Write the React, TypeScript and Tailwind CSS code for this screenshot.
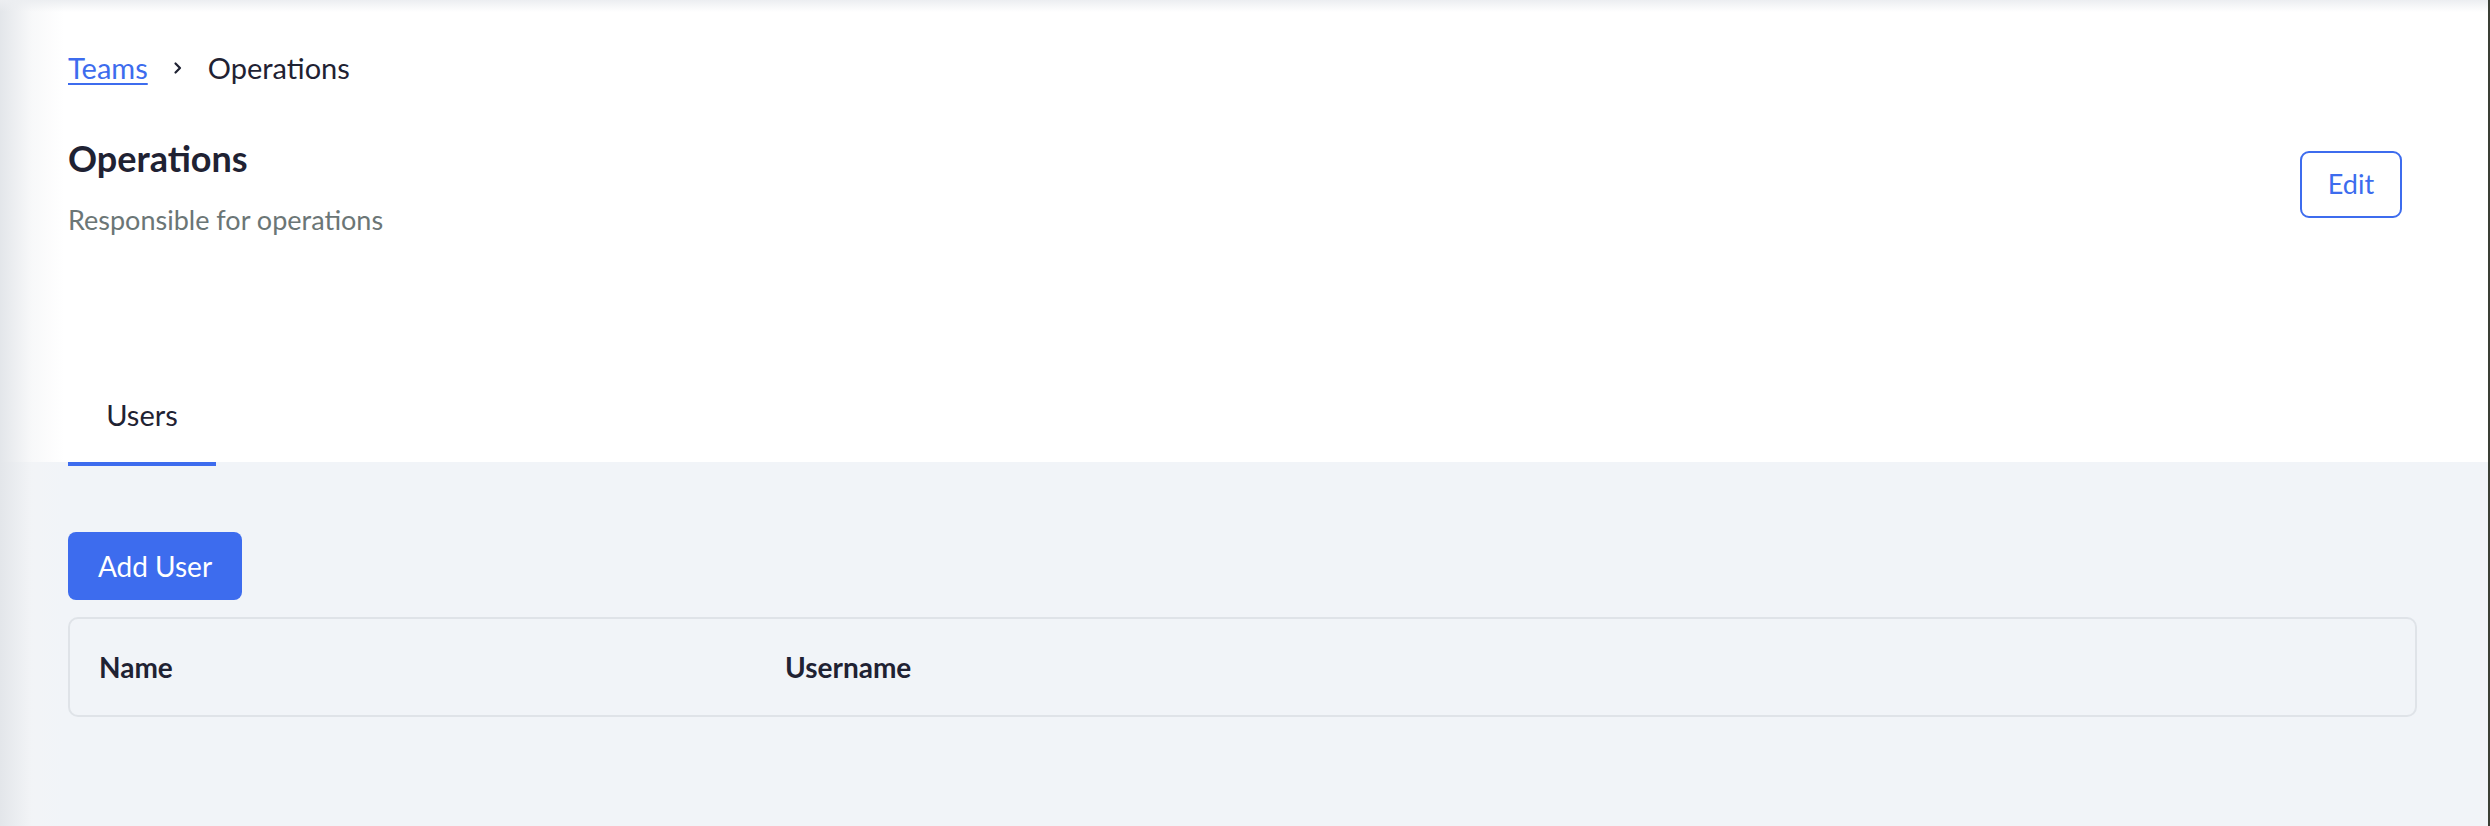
import React from "react";

function Chevron() {
  return (
    <svg width="12" height="14" viewBox="0 0 12 14" fill="none" className="mx-[24px]">
      <path d="M3.5 2.5 L8 7 L3.5 11.5" stroke="#1f2233" strokeWidth="2.2" strokeLinecap="round" strokeLinejoin="round" />
    </svg>
  );
}

export default function App() {
  return (
    <div className="w-[2490px] h-[826px] flex overflow-hidden font-['Lato','Noto_Sans',sans-serif] text-[#1f2233]">
      <div className="relative flex-1 flex flex-col bg-[#f1f4f8]">
        {/* shadows at the left and top edges */}
        <div className="pointer-events-none absolute left-0 top-0 bottom-0 w-[64px] bg-gradient-to-r from-[#e3e6ea] via-[#f3f4f6]/60 to-transparent z-10" />
        <div className="pointer-events-none absolute left-0 right-0 top-0 h-[12px] bg-gradient-to-b from-[#eceef1] to-transparent z-10" />

        <div className="bg-white px-[68px] pt-[48px] h-[462px] flex flex-col">
          <nav className="flex items-center text-[29px] leading-[40px]">
            <a className="text-[#3d6cee] underline underline-offset-[4px] decoration-[2px]">Teams</a>
            <Chevron />
            <span>Operations</span>
          </nav>

          <div className="flex items-start justify-between mt-[47px] pr-[18px]">
            <div>
              <h1 className="text-[36px] leading-[46px] font-bold">Operations</h1>
              <p className="mt-[22px] text-[27px] leading-[34px] text-[#6b7676]">Responsible for operations</p>
            </div>
            <button className="mt-[16px] w-[102px] h-[67px] border-2 border-[#3d6cee] rounded-[9px] text-[#3d6cee] text-[27px]">
              Edit
            </button>
          </div>

          <div className="mt-auto flex">
            <div className="relative z-20 -mb-[4px] w-[148px] h-[96px] border-b-4 border-[#3d6cee] flex items-start justify-center pt-[25px] text-[29px] leading-[40px]">
              Users
            </div>
          </div>
        </div>

        <div className="px-[68px] pt-[70px] pr-[71px]">
          <button className="w-[174px] h-[68px] bg-[#3d6cee] rounded-[8px] text-white text-[28px]">Add User</button>
          <div className="mt-[17px] h-[100px] border-2 border-[#dfe3e8] rounded-[10px] flex items-center">
            <div className="w-[686px] pl-[29px] text-[28px] font-bold">Name</div>
            <div className="pl-[29px] text-[28px] font-bold">Username</div>
          </div>
        </div>
      </div>
      <div className="w-[2px] bg-[#3a3f35]" />
    </div>
  );
}
